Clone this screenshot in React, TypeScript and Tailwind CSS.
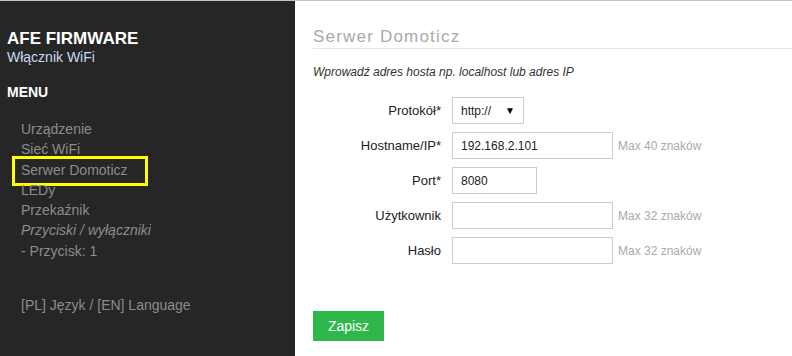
import React from "react";

const MENU = [
  { label: "Urządzenie" },
  { label: "Sieć WiFi" },
  { label: "Serwer Domoticz", marked: true },
  { label: "LEDy" },
  { label: "Przekaźnik" },
  { label: "Przyciski / wyłączniki", italic: true },
  { label: "- Przycisk: 1" },
];

type Field = { label: string; value?: string; width: string; hint?: string; select?: boolean };

const FIELDS: Field[] = [
  { label: "Protokół*", value: "http://", width: "w-[72px]", select: true },
  { label: "Hostname/IP*", value: "192.168.2.101", width: "w-[161px]", hint: "Max 40 znaków" },
  { label: "Port*", value: "8080", width: "w-[85px]" },
  { label: "Użytkownik", width: "w-[161px]", hint: "Max 32 znaków" },
  { label: "Hasło", width: "w-[161px]", hint: "Max 32 znaków" },
];

function Sidebar() {
  return (
    <aside className="w-[295px] shrink-0 bg-[#262626] pt-[28px] pl-[7px]">
      <h1 className="text-[17px] font-bold leading-[20px] text-white">AFE FIRMWARE</h1>
      <p className="text-[14px] leading-[16px] text-[#c4dbf0]">Włącznik WiFi</p>
      <h2 className="mt-[19px] text-[14px] font-bold leading-[16px] text-white">MENU</h2>

      <ul className="mt-[19px] pl-[14px] text-[14px] leading-[20.3px] text-[#8c8c8c]">
        {MENU.map((m) => (
          <li key={m.label} className={`relative ${m.italic ? "italic" : ""}`}>
            {m.label}
            {m.marked && (
              // yellow annotation frame drawn over the menu
              <span className="pointer-events-none absolute left-[-9px] top-[-4px] h-[30px] w-[136px] border-[3px] border-[#ffff00]" />
            )}
          </li>
        ))}
      </ul>

      <p className="mt-[36px] pl-[14px] text-[14px] leading-[16px] text-[#8c8c8c]">
        [PL] Język / [EN] Language
      </p>
    </aside>
  );
}

function FormRow({ f }: { f: Field }) {
  return (
    <div className="flex items-center">
      <label className="w-[139px] pr-[11px] text-right text-[13px] text-[#222]">{f.label}</label>
      <div
        className={`flex h-[27px] ${f.width} items-center border border-[#ccc] bg-white px-[8px] text-[12px] text-[#222]`}
      >
        <span className="flex-1">{f.value}</span>
        {f.select && <span className="text-[10px] text-black">▼</span>}
      </div>
      {f.hint && <span className="ml-[5px] text-[12px] text-[#aaa]">{f.hint}</span>}
    </div>
  );
}

export default function App() {
  return (
    <div className="flex h-[356px] w-[792px] border-t border-[#c4c4c4] font-['Liberation_Sans',Arial,sans-serif]">
      <Sidebar />

      <main className="flex-1 bg-white pt-[26px] pl-[18px]">
        <h2 className="border-b border-[#e5e5e5] pb-[1px] text-[17px] leading-[20px] tracking-[1.2px] text-[#a9a9a9]">
          Serwer Domoticz
        </h2>
        <p className="mt-[14px] text-[12px] italic text-[#333]">
          Wprowadź adres hosta np. localhost lub adres IP
        </p>

        <div className="mt-[16px] flex flex-col gap-[8px]">
          {FIELDS.map((f) => (
            <FormRow key={f.label} f={f} />
          ))}
        </div>

        <button className="mt-[47px] h-[30px] w-[71px] bg-[#2eb84b] text-[14px] text-white">
          Zapisz
        </button>
      </main>
    </div>
  );
}
